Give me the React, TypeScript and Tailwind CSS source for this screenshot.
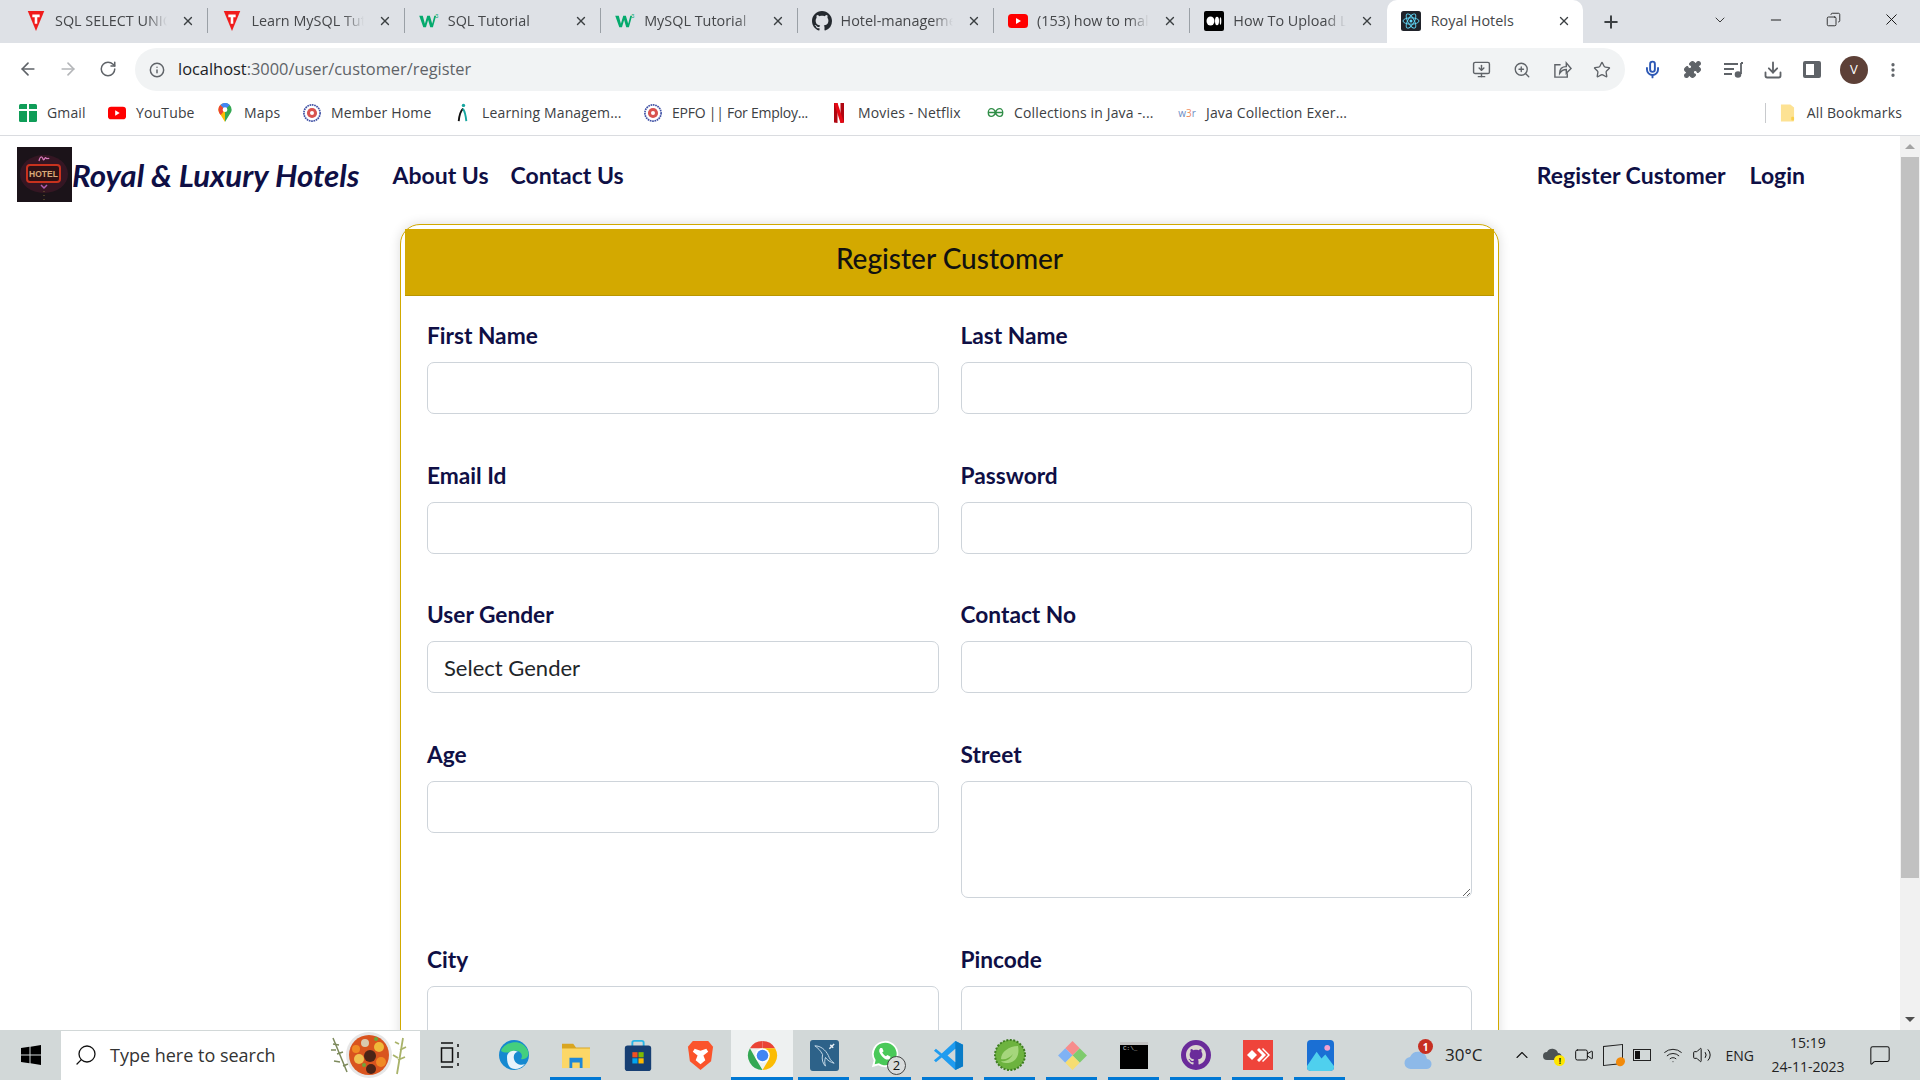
import type { ReactNode } from "react";
import {
  ArrowLeft,
  ArrowRight,
  RotateCw,
  Info,
  Plus,
  X,
  ChevronDown,
  ChevronUp,
  Minus,
  Copy,
  ZoomIn,
  Star,
  Mic,
  Puzzle,
  Download,
  MonitorDown,
  EllipsisVertical,
  Search,
  Video,
  Volume2,
  Wifi,
  MessageSquare,
} from "lucide-react";

function TeeIcon() {
  return (
    <svg viewBox="0 0 20 24" className="h-[22px] w-[20px]">
      <path d="M1 1h18l-9 22z" fill="#f01c1c" />
      <path d="M6 5h8v3h-2.600v7H8.600V8H6z" fill="#fff" />
    </svg>
  );
}

function W3Icon() {
  return (
    <svg viewBox="0 0 22 18" className="h-[16px] w-[21px]">
      <path d="M0 3h4l2.400 9L9 3h3l2.600 9L17 3h2l-3.600 13h-3L10 8l-2.400 8h-3z" fill="#04aa6d" />
      <text x="18" y="6" fontSize="6" fill="#04aa6d" fontFamily="Lato">3</text>
    </svg>
  );
}

function GithubIcon({ className = "h-5 w-5" }: { className?: string }) {
  return (
    <svg viewBox="0 0 16 16" className={className} fill="#24292f">
      <path d="M8 0C3.580 0 0 3.580 0 8c0 3.540 2.290 6.530 5.470 7.590.4.070.55-.17.55-.38 0-.19-.01-.82-.01-1.490-2.010.37-2.530-.49-2.690-.94-.09-.23-.48-.94-.82-1.130-.28-.15-.68-.52-.01-.53.63-.01 1.080.58 1.230.82.72 1.210 1.870.87 2.330.66.07-.52.28-.87.51-1.070-1.780-.2-3.640-.89-3.640-3.950 0-.87.31-1.590.82-2.150-.08-.2-.36-1.020.08-2.120 0 0 .67-.21 2.200.82.64-.18 1.320-.27 2-.27s1.360.09 2 .27c1.530-1.040 2.200-.82 2.200-.82.44 1.100.16 1.920.08 2.120.51.56.82 1.270.82 2.150 0 3.070-1.870 3.750-3.650 3.950.29.25.54.73.54 1.480 0 1.070-.01 1.930-.01 2.200 0 .21.15.46.55.38A8.010 8.010 0 0 0 16 8c0-4.420-3.580-8-8-8z" />
    </svg>
  );
}

function YoutubeIcon() {
  return (
    <svg viewBox="0 0 20 14" className="h-[14px] w-[20px]">
      <rect width="20" height="14" rx="3.500" fill="#f00" />
      <path d="M8 4l5 3-5 3z" fill="#fff" />
    </svg>
  );
}

function MediumIcon() {
  return (
    <svg viewBox="0 0 20 20" className="h-[20px] w-[20px]">
      <rect width="20" height="20" rx="2" fill="#000" />
      <ellipse cx="6.500" cy="10" rx="4" ry="4.500" fill="#fff" />
      <ellipse cx="13" cy="10" rx="2" ry="4.200" fill="#fff" />
      <ellipse cx="16.500" cy="10" rx="0.800" ry="3.800" fill="#fff" />
    </svg>
  );
}

function ReactIcon() {
  return (
    <svg viewBox="0 0 20 20" className="h-[20px] w-[20px]">
      <rect width="20" height="20" rx="2.500" fill="#20232a" />
      <g fill="none" stroke="#61dafb" strokeWidth="0.900">
        <ellipse cx="10" cy="10" rx="8" ry="3.200" />
        <ellipse cx="10" cy="10" rx="8" ry="3.200" transform="rotate(60 10 10)" />
        <ellipse cx="10" cy="10" rx="8" ry="3.200" transform="rotate(120 10 10)" />
      </g>
      <circle cx="10" cy="10" r="1.500" fill="#61dafb" />
    </svg>
  );
}

const tabs: { title: string; icon: ReactNode }[] = [
  { title: "SQL SELECT UNIC", icon: <TeeIcon /> },
  { title: "Learn MySQL Tut", icon: <TeeIcon /> },
  { title: "SQL Tutorial", icon: <W3Icon /> },
  { title: "MySQL Tutorial", icon: <W3Icon /> },
  { title: "Hotel-manageme", icon: <GithubIcon /> },
  { title: "(153) how to mal", icon: <YoutubeIcon /> },
  { title: "How To Upload L", icon: <MediumIcon /> },
];

function Tab({ title, icon, last }: { title: string; icon: ReactNode; last: boolean }) {
  return (
    <div className="flex h-[43px] w-[196.400px] items-center pb-[2px] pl-[14px]">
      <span className="flex w-[20px] justify-center">{icon}</span>
      <span className="ml-[9px] w-[113px] overflow-hidden whitespace-nowrap text-[14.400px] text-[#45474a] [mask-image:linear-gradient(to_right,black_82%,transparent)]">
        {title}
      </span>
      <X className="ml-[14px] h-[14px] w-[14px] text-[#3c4043]" strokeWidth={2.400} />
      {!last && <span className="ml-[12px] h-[25px] w-px bg-[#9aa0a6]" />}
    </div>
  );
}

function TabStrip() {
  return (
    <div className="flex h-[43px] items-center bg-[#dee1e6] pl-[12px]">
      {tabs.map((t, i) => (
        <Tab key={t.title} title={t.title} icon={t.icon} last={i === tabs.length - 1} />
      ))}
      <div className="flex h-[43px] w-[196px] items-center rounded-t-[10px] bg-white pb-[2px] pl-[14px]">
        <ReactIcon />
        <span className="ml-[10px] w-[113px] text-[14.400px] text-[#45474a]">Royal Hotels</span>
        <X className="ml-[13px] h-[14px] w-[14px] text-[#3c4043]" strokeWidth={2.400} />
      </div>
      <Plus className="ml-[18px] h-[20px] w-[20px] text-[#3c4043]" strokeWidth={2.400} />
      <ChevronDown className="ml-[91px] mb-[4px] h-[16px] w-[16px] text-[#222]" strokeWidth={1.300} />
      <Minus className="ml-[40px] mb-[4px] h-[16px] w-[16px] text-[#111]" strokeWidth={1.400} />
      <Copy className="ml-[42px] mb-[4px] h-[15px] w-[15px] -scale-x-100 text-[#111]" strokeWidth={1.300} />
      <X className="ml-[41px] mb-[4px] h-[19px] w-[19px] text-[#111]" strokeWidth={1.200} />
    </div>
  );
}

function Toolbar() {
  return (
    <div className="flex h-[48px] items-start bg-white pt-[5px]">
      <ArrowLeft className="ml-[18px] mt-[11px] h-[20px] w-[20px] text-[#5f6368]" strokeWidth={2} />
      <ArrowRight className="ml-[20px] mt-[11px] h-[20px] w-[20px] text-[#b4b6b9]" strokeWidth={2} />
      <RotateCw className="ml-[21px] mt-[12px] h-[18px] w-[18px] text-[#5f6368]" strokeWidth={2} />
      <div className="ml-[18px] flex h-[43px] w-[1490px] items-center rounded-full bg-[#f1f3f4] pl-[14px]">
        <Info className="h-[16px] w-[16px] text-[#5f6368]" strokeWidth={2.200} />
        <span className="ml-[13px] text-[16.400px] text-[#202124]">
          localhost<span className="text-[#5f6368]">:3000/user/customer/register</span>
        </span>
        <MonitorDown className="ml-auto h-[19px] w-[19px] text-[#5f6368]" strokeWidth={1.800} />
        <ZoomIn className="ml-[22px] h-[18px] w-[18px] text-[#5f6368]" strokeWidth={1.800} />
        <svg
          viewBox="0 0 20 20"
          className="ml-[22px] h-[19px] w-[19px]"
          fill="none"
          stroke="#5f6368"
          strokeWidth="1.500"
        >
          <path d="M8 5H2v13h13v-4" />
          <path d="M7 14c0-5 3-7 7-7V3l5 6-5 5v-4c-3 0-5 1-7 4z" />
        </svg>
        <Star className="ml-[21px] mr-[14px] h-[18px] w-[18px] text-[#5f6368]" strokeWidth={1.800} />
      </div>
      <div className="ml-[18px] flex h-[43px] items-center text-[#5f6368]">
        <Mic className="h-[19px] w-[19px] text-[#2b57b5]" strokeWidth={2.400} />
        <Puzzle className="ml-[21px] h-[19px] w-[19px] fill-[#5f6368]" strokeWidth={1.500} />
        <svg viewBox="0 0 20 20" className="ml-[21px] h-[20px] w-[20px]" fill="none" stroke="#5f6368" strokeWidth="1.800">
          <path d="M1 4h14M1 9h10M1 14h8M18 3v11" />
          <circle cx="15" cy="14.500" r="2.400" fill="#5f6368" />
          <path d="M18 3h2" />
        </svg>
        <Download className="ml-[20px] h-[20px] w-[20px]" strokeWidth={2.200} />
        <div className="ml-[20px] flex h-[17px] w-[18px] justify-end rounded-[2px] border-[3px] border-[#5f6368]">
          <div className="h-full w-[4px] bg-[#5f6368]" />
        </div>
        <div className="ml-[19px] flex h-[28px] w-[28px] items-center justify-center rounded-full bg-[#5d4037] text-[13px] text-white">
          V
        </div>
        <EllipsisVertical className="ml-[16px] h-[18px] w-[18px]" strokeWidth={2.400} />
      </div>
    </div>
  );
}

function Dial({ color }: { color: string }) {
  return (
    <svg viewBox="0 0 16 16" className="h-[18px] w-[18px]">
      <circle cx="8" cy="8" r="7.200" fill="none" stroke="#3f51a5" strokeWidth="1.500" strokeDasharray="1.500 0.600" />
      <circle cx="8" cy="8" r="4.500" fill={color} />
      <circle cx="8" cy="8" r="1.800" fill="#fff" />
    </svg>
  );
}

const bookmarks: { label: string; width: number; tight?: boolean; icon: ReactNode }[] = [
  {
    label: "Gmail",
    width: 40,
    icon: (
      <svg viewBox="0 0 18 18" className="h-[18px] w-[18px]">
        <rect width="18" height="18" rx="1.500" fill="#0f9d58" />
        <path d="M8 0h2v18H8zM0 5h18v2H0z" fill="#fff" />
      </svg>
    ),
  },
  { label: "YouTube", width: 59, icon: <YoutubeIcon /> },
  {
    label: "Maps",
    width: 38,
    icon: (
      <svg viewBox="0 0 14 20" className="h-[19px] w-[14px]">
        <path d="M7 0a7 7 0 0 1 7 7c0 2-1 3.500-2.500 5.500L7 20z" fill="#34a853" />
        <path d="M7 0a7 7 0 0 0-7 7c0 2 1 3.500 2.500 5.500L7 20z" fill="#fbbc04" />
        <path d="M2 2a7 7 0 0 1 10 0L7 7z" fill="#4285f4" />
        <path d="M0 7a7 7 0 0 1 2-5l5 5-4.500 5.500A9 9 0 0 1 0 7z" fill="#ea4335" />
        <circle cx="7" cy="7" r="2.500" fill="#fff" />
      </svg>
    ),
  },
  { label: "Member Home", width: 102, icon: <Dial color="#d9534f" /> },
  {
    label: "Learning Managem...",
    width: 141,
    icon: (
      <svg viewBox="0 0 14 20" className="h-[19px] w-[14px]">
        <circle cx="7.500" cy="2.500" r="1.800" fill="#16a6a0" />
        <path d="M7 6C4 9 3 14 2.500 19" fill="none" stroke="#111" strokeWidth="2" />
        <path d="M7 6c2 3 3 8 3.500 13" fill="none" stroke="#16a6a0" strokeWidth="2" />
      </svg>
    ),
  },
  { label: "EPFO || For Employ...", width: 137, tight: true, icon: <Dial color="#d9534f" /> },
  {
    label: "Movies - Netflix",
    width: 107,
    icon: (
      <svg viewBox="0 0 12 20" className="h-[20px] w-[12px]">
        <path d="M1 0h3.500v20L1 19.500zM7.500 0H11v19.500L7.500 20z" fill="#b00610" />
        <path d="M1 0h3.500l6.500 19.500L7.500 20z" fill="#e50914" />
      </svg>
    ),
  },
  {
    label: "Collections in Java -...",
    width: 143,
    icon: (
      <svg viewBox="0 0 20 12" className="h-[11px] w-[17px]" fill="none" stroke="#2f8d46" strokeWidth="1.600">
        <path d="M1 6h18M10 6c-1-3-3-4.500-5-4.500S1.500 3.500 1.500 6 3 10.500 5 10.500 9 9 10 6c1 3 3 4.500 5 4.500s3.500-2 3.500-4.500S17 1.500 15 1.500 11 3 10 6z" />
      </svg>
    ),
  },
  {
    label: "Java Collection Exer...",
    width: 141,
    icon: (
      <span className="text-[10px] leading-none text-[#6b8cc4]">
        w<span className="text-[#f08a5d]">3</span>r
      </span>
    ),
  },
];

function BookmarksBar() {
  return (
    <div className="flex h-[45px] items-center border-b border-[#dadce0] bg-white pb-px pl-[19px]">
      {bookmarks.map((b) => (
        <div key={b.label} className="mr-[21px] flex items-center">
          <span className="flex w-[18px] justify-center">{b.icon}</span>
          <span
            className={
              b.tight
                ? "ml-[10px] whitespace-nowrap text-[14px] tracking-[-0.250px] text-[#3c4043]"
                : "ml-[10px] whitespace-nowrap text-[14px] tracking-[0.150px] text-[#3c4043]"
            }
            style={{ width: b.width }}
          >
            {b.label}
          </span>
        </div>
      ))}
      <span className="ml-auto h-[20px] w-px bg-[#c8cacd]" />
      <svg viewBox="0 0 16 18" className="ml-[14px] h-[18px] w-[15px]">
        <path d="M1 0h10l4 3v14a1 1 0 0 1-1 1H1z" fill="#fde293" />
        <rect x="12" y="13" width="3" height="4" rx="1" fill="#f9cf4a" />
      </svg>
      <span className="ml-[12px] mr-[18px] whitespace-nowrap text-[14px] tracking-[0.150px] text-[#3c4043]">
        All Bookmarks
      </span>
    </div>
  );
}

function HotelLogo() {
  return (
    <svg viewBox="0 0 55 55" className="h-[55px] w-[55px]">
      <rect width="55" height="55" fill="#1b1319" />
      <ellipse cx="27" cy="27" rx="24" ry="19" fill="#4a1a2c" fillOpacity="0.550" />
      <path d="M22 14c1-5 3-5 4-2s2-3 3-1 2-1 3 1" fill="none" stroke="#d678b8" strokeWidth="1.300" />
      <rect x="10" y="18" width="33" height="17" rx="3" fill="#2e1115" stroke="#c8321e" strokeWidth="2" />
      <text x="26.500" y="30" textAnchor="middle" fontSize="8.500" fontWeight="700" fill="#d8a878" fontFamily="Liberation Sans">
        HOTEL
      </text>
      <path d="M24 38l3 3 3-3" fill="none" stroke="#b060b0" strokeWidth="1.500" />
      <path d="M27 44v1M27 48v1M27 52v1" stroke="#6a5a30" strokeWidth="1.200" />
    </svg>
  );
}

function Navbar() {
  return (
    <div className="flex items-center pl-[17px] pt-[11px] text-[#0f0f45]">
      <HotelLogo />
      <span className="pt-[1px] text-[31.300px] font-bold italic">Royal &amp; Luxury Hotels</span>
      <span className="ml-[33px] pt-[2px] text-[23px] font-bold">About Us</span>
      <span className="ml-[22px] pt-[2px] text-[23px] font-bold">Contact Us</span>
      <span className="ml-auto pt-[2px] text-[23px] font-bold">Register Customer</span>
      <span className="ml-[24px] mr-[95px] pt-[2px] text-[23px] font-bold">Login</span>
    </div>
  );
}

function Field({ label, children }: { label: string; children: ReactNode }) {
  return (
    <div className="mb-[47.700px]">
      <label className="mb-[13px] block pt-[1px] text-[22.700px] font-bold leading-[26px] text-[#0f0f45]">{label}</label>
      {children}
    </div>
  );
}

const inputClass = "block h-[52px] w-full rounded-[7px] border border-[#ced4da] bg-white px-[16px] text-[22px] text-[#212529]";

function RegisterCard() {
  return (
    <div className="ml-[400px] mt-[22px] w-[1099px] rounded-[20px] border border-[#d1a900] bg-white p-[4px] shadow-[0_0_12px_rgba(0,0,0,0.14)]">
      <div className="h-[67px] border-b border-[#b99600] bg-[#d3a900] pt-[11px] text-center text-[28px] font-medium leading-[36px] text-[#111]">
        Register Customer
      </div>
      <div className="grid grid-cols-2 gap-x-[22px] pl-[22px] pr-[22px] pt-[26px]">
        <Field label="First Name"><input className={inputClass} /></Field>
        <Field label="Last Name"><input className={inputClass} /></Field>
        <Field label="Email Id"><input className={inputClass} /></Field>
        <Field label="Password"><input className={inputClass} /></Field>
        <Field label="User Gender">
          <select className={`${inputClass} appearance-none`}>
            <option>Select Gender</option>
          </select>
        </Field>
        <Field label="Contact No"><input className={inputClass} /></Field>
        <Field label="Age"><input className={inputClass} /></Field>
        <Field label="Street">
          <textarea className="block h-[117px] w-full rounded-[7px] border border-[#ced4da] bg-white" />
        </Field>
        <Field label="City"><input className={inputClass} /></Field>
        <Field label="Pincode"><input className={inputClass} /></Field>
      </div>
    </div>
  );
}

function PageScrollbar() {
  return (
    <div className="flex w-[20px] flex-col items-center bg-[#f1f1f1]">
      <span className="mt-[8px] h-0 w-0 border-x-[5px] border-b-[5px] border-x-transparent border-b-[#a3a3a3]" />
      <div className="mt-[8px] h-[721px] w-[18px] bg-[#c1c1c1]" />
      <span className="mt-auto mb-[8px] h-0 w-0 border-x-[5px] border-t-[5px] border-x-transparent border-t-[#505050]" />
    </div>
  );
}

function FoodDoodle() {
  return (
    <svg viewBox="0 0 90 50" className="h-[50px] w-[90px]">
      <path d="M6 8l14 34" stroke="#7d8a5c" strokeWidth="1.500" />
      <path d="M6 14l6 1M9 20l-5 0M10 24l6-2M13 32l-6-1M16 36l5-2" stroke="#7d8a5c" strokeWidth="1.500" />
      <circle cx="42" cy="25" r="23" fill="#e6e6e6" />
      <circle cx="42" cy="25" r="20" fill="#d9541e" />
      <circle cx="38" cy="13" r="4" fill="#d8c9b0" />
      <circle cx="52" cy="17" r="5" fill="#f0b93a" />
      <circle cx="43" cy="26" r="6" fill="#4c2417" />
      <circle cx="32" cy="29" r="5" fill="#f0c252" />
      <circle cx="54" cy="32" r="5" fill="#f08a24" />
      <circle cx="44" cy="39" r="5" fill="#4c2417" />
      <circle cx="29" cy="19" r="4" fill="#f08a24" />
      <circle cx="49" cy="9" r="2" fill="#6fa63a" />
      <circle cx="37" cy="35" r="2" fill="#6fa63a" />
      <path d="M76 8l-6 36M72 14l-4-2M73 20l6-3M71 28l-5-3M71 30l7-3" stroke="#a9b36a" strokeWidth="1.800" fill="none" />
    </svg>
  );
}

function TaskViewIcon() {
  return (
    <svg viewBox="0 0 20 26" className="h-[26px] w-[20px]" fill="none" stroke="#111" strokeWidth="1.500">
      <path d="M1 1h12M1 25h12" />
      <rect x="1.500" y="6" width="11" height="14" />
      <path d="M18 2v3M18 10v6M18 21v3" />
    </svg>
  );
}

const appIcons: { key: string; open: boolean; icon: ReactNode; active?: boolean }[] = [
  {
    key: "edge",
    open: false,
    icon: (
      <svg viewBox="0 0 32 32" className="h-[32px] w-[32px]">
        <circle cx="16" cy="16" r="15" fill="#1689d0" />
        <path d="M3 12C6 3 24-2 30 12c2 6-3 9-7 8 3-5-2-9-7-8-5 1-8 3-13 0z" fill="#44cf7e" />
        <path d="M9 18c0-5 6-8 11-5-3 0-5 3-4 7 1 5 7 7 11 5-4 5-10 6-14 4-3-2-4-6-4-11z" fill="#fff" fillOpacity="0.900" />
      </svg>
    ),
  },
  {
    key: "explorer",
    open: true,
    icon: (
      <svg viewBox="0 0 30 28" className="h-[28px] w-[28px]">
        <path d="M0 2h12l3 4h15v21H0z" fill="#d9a520" />
        <path d="M0 7h30v21H0z" fill="#fcd767" />
        <path d="M8 17h14v11h-3v-6h-8v6H8z" fill="#1e88d8" />
      </svg>
    ),
  },
  {
    key: "store",
    open: false,
    icon: (
      <svg viewBox="0 0 28 34" className="h-[32px] w-[28px]">
        <path d="M8 8V4a2 2 0 0 1 2-2h8a2 2 0 0 1 2 2v4" fill="none" stroke="#29b6e8" strokeWidth="2" />
        <rect y="7" width="28" height="27" rx="3" fill="#173f73" />
        <rect x="8" y="14" width="5.500" height="5.500" fill="#f25022" />
        <rect x="14.500" y="14" width="5.500" height="5.500" fill="#7fba00" />
        <rect x="8" y="20.500" width="5.500" height="5.500" fill="#00a4ef" />
        <rect x="14.500" y="20.500" width="5.500" height="5.500" fill="#ffb900" />
      </svg>
    ),
  },
  {
    key: "brave",
    open: false,
    icon: (
      <svg viewBox="0 0 28 32" className="h-[31px] w-[27px]">
        <path d="M6 1h16l5 6-2 15-11 9-11-9L1 7z" fill="#fb542b" />
        <path d="M8 9l6 2 6-2 2 3-5 4 2 5-5 4-5-4 2-5-5-4z" fill="#fff" />
      </svg>
    ),
  },
  {
    key: "chrome",
    open: true,
    active: true,
    icon: (
      <svg viewBox="0 0 32 32" className="h-[31px] w-[31px]">
        <path d="M16 1a15 15 0 0 1 13 7.500H16z" fill="#ea4335" />
        <path d="M3 8.500A15 15 0 0 1 16 1v7.500H8z" fill="#ea4335" />
        <path d="M3 8.500L9.500 20 16 31A15 15 0 0 1 3 8.500z" fill="#34a853" />
        <path d="M29 8.500A15 15 0 0 1 16 31l6.500-11L16 8.500z" fill="#fbbc04" />
        <circle cx="16" cy="16" r="7.500" fill="#fff" />
        <circle cx="16" cy="16" r="6" fill="#4285f4" />
      </svg>
    ),
  },
  {
    key: "mysql",
    open: true,
    icon: (
      <svg viewBox="0 0 30 32" className="h-[31px] w-[29px]">
        <rect width="30" height="32" rx="3" fill="#2d6289" />
        <path d="M5 6c6 0 11 4 14 10 1 3 3 6 6 8-4-1-7-3-9-6-1 3-1 6 0 9-3-3-4-7-3-12C11 11 8 8 5 6z" fill="none" stroke="#c7dbe8" strokeWidth="1" />
        <path d="M20 9l5-5M24 8l-3-3" stroke="#e6eef4" strokeWidth="1.500" />
      </svg>
    ),
  },
  {
    key: "whatsapp",
    open: true,
    icon: (
      <div className="relative h-[32px] w-[32px]">
        <svg viewBox="0 0 32 32" className="h-[30px] w-[30px]">
          <path d="M16 2a14 14 0 0 0-12 21L2 30l7-2A14 14 0 1 0 16 2z" fill="#fff" />
          <path d="M16 4a12 12 0 0 0-10 18.500L5 27l4.500-1.200A12 12 0 1 0 16 4z" fill="#4ac959" />
          <path d="M11 9.500c-2 2-1.500 5 1.500 8.500s6.500 5 8.500 3l1-2-3.500-2-1.500 1.500c-2-1-3-2.500-4-4l1.500-1.500-1.500-3.500z" fill="#fff" />
        </svg>
        <span className="absolute -right-[4px] bottom-[-4px] flex h-[19px] w-[19px] items-center justify-center rounded-full border border-[#444] bg-[#d9dcdc] text-[13px] leading-none text-[#111]">
          2
        </span>
      </div>
    ),
  },
  {
    key: "vscode",
    open: true,
    icon: (
      <svg viewBox="0 0 32 32" className="h-[31px] w-[31px]">
        <path d="M23 1l8 4v22l-8 4L9 18l-6 5-2-2 6-5-6-5 2-2 6 5z" fill="#1f9cf0" />
        <path d="M23 1l8 4v22l-8 4z" fill="#0a7cc7" />
        <path d="M23 9l-8 7 8 7z" fill="#d2d8d8" />
      </svg>
    ),
  },
  {
    key: "spring",
    open: true,
    icon: (
      <svg viewBox="0 0 32 32" className="h-[32px] w-[32px]">
        <circle cx="16" cy="16" r="15" fill="#6db33f" stroke="#3f7d22" strokeWidth="2" strokeDasharray="2 1.500" />
        <path d="M24 7c2 9-2 17-12 17-3 0-4-1-5-2 6 1 10-3 12-7-3 4-8 6-12 5 0-7 8-13 17-13z" fill="#a5d67c" />
      </svg>
    ),
  },
  {
    key: "git",
    open: true,
    icon: (
      <svg viewBox="0 0 32 32" className="h-[33px] w-[33px]">
        <path d="M16 2l7 7-7 7-7-7z" fill="#f78c8c" />
        <path d="M9 9l7 7-7 7-7-7z" fill="#7fb2f5" />
        <path d="M23 9l7 7-7 7-7-7z" fill="#7fcb6d" />
        <path d="M16 16l7 7-7 7-7-7z" fill="#f6dd72" />
      </svg>
    ),
  },
  {
    key: "terminal",
    open: true,
    icon: (
      <div className="h-[27px] w-[28px] border-t-[3px] border-[#c3c3c3] bg-black pl-[3px] font-['Liberation_Mono',monospace] text-[6px] leading-[8px] text-[#ccc]">
        C:\_
      </div>
    ),
  },
  {
    key: "github",
    open: true,
    icon: (
      <div className="flex h-[30px] w-[30px] items-center justify-center rounded-full border-[3px] border-[#6a2b9a] bg-[#6a2b9a]">
        <GithubIcon className="h-[20px] w-[20px] invert" />
      </div>
    ),
  },
  {
    key: "anydesk",
    open: true,
    icon: (
      <svg viewBox="0 0 30 30" className="h-[30px] w-[30px]">
        <rect width="30" height="30" fill="#ef443b" />
        <path d="M9 10l5 5-5 5-5-5z" fill="#fff" />
        <path d="M16 8l7 7-7 7-2-2 5-5-5-5zM20 8l7 7-7 7-1-1 6-6-6-6z" fill="#fff" />
      </svg>
    ),
  },
  {
    key: "photos",
    open: true,
    icon: (
      <svg viewBox="0 0 28 32" className="h-[31px] w-[27px]">
        <rect width="28" height="32" rx="4" fill="#1a6fd4" />
        <path d="M0 27l10-15 5 7 4-4 9 12v1a4 4 0 0 1-4 4H4a4 4 0 0 1-4-4z" fill="#4fd0ee" />
        <circle cx="21" cy="8" r="3" fill="#f2a0d0" />
      </svg>
    ),
  },
];

function Taskbar() {
  return (
    <div className="flex h-[50px] items-center bg-[#d2d8d8] text-[#111]">
      <div className="flex w-[61px] justify-center">
        <svg viewBox="0 0 20 20" className="h-[20px] w-[20px]" fill="#000">
          <path d="M0 3l8.500-1.200V9.500H0zM9.500 1.700L20 0v9.500H9.500zM0 10.500h8.500v7.700L0 17zM9.500 10.500H20V20L9.500 18.300z" />
        </svg>
      </div>
      <div className="flex h-[49px] w-[359px] items-center bg-white pl-[13px]">
        <Search className="h-[24px] w-[24px] -scale-x-100" strokeWidth={1.300} />
        <span className="ml-[12px] text-[18px] text-[#333]">Type here to search</span>
        <span className="ml-auto mr-[3px]"><FoodDoodle /></span>
      </div>
      <div className="ml-[20px] mr-[23px] flex w-[20px] justify-center">
        <TaskViewIcon />
      </div>
      <div className="flex">
        {appIcons.map((a) => (
          <div
            key={a.key}
            className={
              a.active
                ? "relative flex h-[50px] w-[62px] items-center justify-center bg-[#eef1f1]"
                : "relative flex h-[50px] w-[62px] items-center justify-center"
            }
          >
            {a.icon}
            {a.open && (
              <span
                className={
                  a.active
                    ? "absolute bottom-0 left-0 h-[3px] w-full bg-[#0078d4]"
                    : "absolute bottom-0 left-[5px] h-[3px] w-[51px] bg-[#0078d4]"
                }
              />
            )}
          </div>
        ))}
      </div>
      <div className="relative ml-[52px] h-[30px] w-[30px]">
        <svg viewBox="0 0 30 22" className="absolute bottom-0 h-[22px] w-[30px]">
          <path d="M8 21a6 6 0 0 1-1-12 9 9 0 0 1 17 2 5 5 0 0 1-1 10z" fill="#8db9e8" />
        </svg>
        <span className="absolute -top-[1px] right-0 flex h-[15px] w-[15px] items-center justify-center rounded-full bg-[#c62f22] text-[10px] font-bold leading-none text-white">
          1
        </span>
      </div>
      <span className="ml-[12px] text-[17px] text-[#222]">30°C</span>
      <ChevronUp className="ml-[30px] h-[20px] w-[20px]" strokeWidth={1.300} />
      <div className="relative ml-[10px] h-[20px] w-[20px]">
        <svg viewBox="0 0 20 16" className="h-[16px] w-[20px]">
          <path d="M5 15a4 4 0 0 1 0-8 6 6 0 0 1 11 1 3.500 3.500 0 0 1 0 7z" fill="#4c5254" />
        </svg>
        <span className="absolute -bottom-[1px] right-[-3px] flex h-[11px] w-[11px] items-center justify-center rounded-full bg-[#ffe600] text-[8px] font-bold leading-none">
          !
        </span>
      </div>
      <Video className="ml-[12px] h-[20px] w-[20px]" strokeWidth={1.200} />
      <div className="relative ml-[9px] h-[20px] w-[20px] -skew-y-6 border border-[#222]">
        <span className="absolute -bottom-[3px] -right-[3px] h-[9px] w-[9px] rounded-full bg-[#f28a0a]" />
      </div>
      <div className="ml-[10px] flex h-[12px] w-[18px] items-center border border-[#222] p-[1px] pr-[10px]">
        <div className="h-full w-full bg-[#111]" />
      </div>
      <Wifi className="ml-[12px] h-[20px] w-[20px]" strokeWidth={1.100} />
      <Volume2 className="ml-[9px] h-[20px] w-[20px]" strokeWidth={1.200} />
      <span className="ml-[13px] text-[14px] text-[#222]">ENG</span>
      <div className="ml-[12px] flex w-[84px] flex-col items-center text-[14px] leading-[24px] text-[#222]">
        <span>15:19</span>
        <span>24-11-2023</span>
      </div>
      <MessageSquare className="ml-[19px] h-[22px] w-[22px]" strokeWidth={1.100} />
    </div>
  );
}

export default function App() {
  return (
    <div className="flex h-screen w-[1920px] flex-col overflow-hidden bg-white font-['Open_Sans',sans-serif]">
      <TabStrip />
      <Toolbar />
      <BookmarksBar />
      <div className="flex min-h-0 flex-1">
        <div className="flex-1 overflow-hidden font-['Lato',sans-serif]">
          <Navbar />
          <RegisterCard />
        </div>
        <PageScrollbar />
      </div>
      <Taskbar />
    </div>
  );
}
